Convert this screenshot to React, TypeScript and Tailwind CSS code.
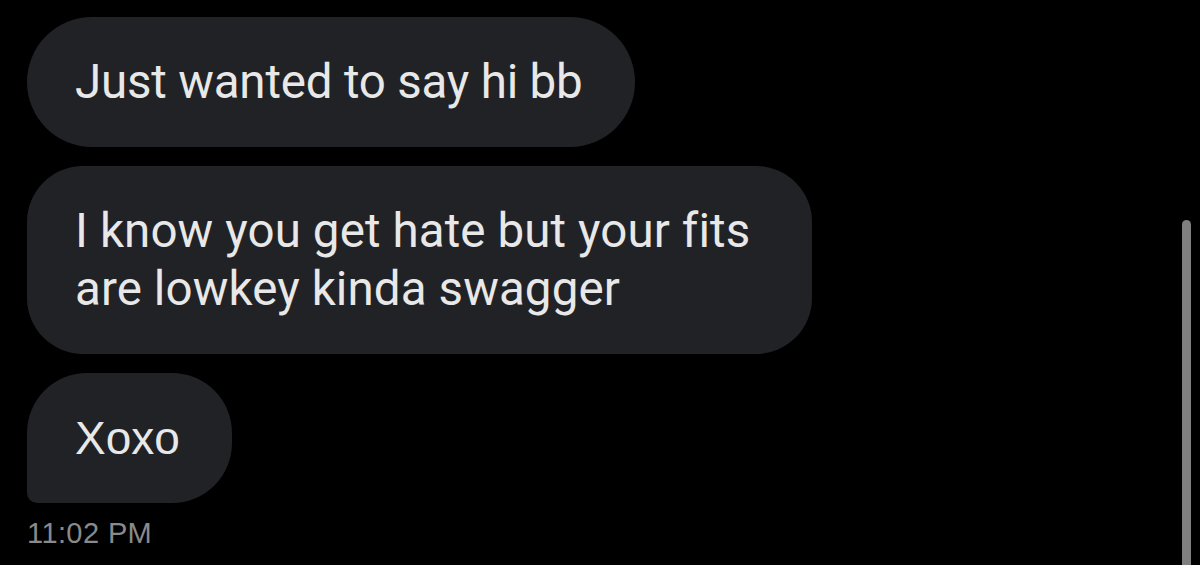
import React from "react";

export default function App() {
  return (
    <div className="relative w-[1200px] h-[565px] overflow-hidden bg-black">
      <div className="flex flex-col items-start gap-[19px] pt-[17px] pl-[27px]">
        <div className="rounded-[65px] bg-[#212226] pl-[48px] pr-[52px] py-[36px] text-[#e8e8e8] text-[47.5px] leading-[58px] tracking-[-0.2px] font-['Roboto',sans-serif]">
          Just wanted to say hi bb
        </div>
        <div className="w-[785px] rounded-[56px] bg-[#212226] pl-[48px] pr-[52px] py-[36px] text-[#e8e8e8] text-[47.5px] leading-[58px] tracking-[0.1px] [font-variant-ligatures:none] font-['Roboto',sans-serif]">
          I know you get hate but your fits are lowkey kinda swagger
        </div>
        <div className="rounded-tl-[60px] rounded-tr-[60px] rounded-br-[60px] rounded-bl-[10px] bg-[#212226] pl-[48px] pr-[52px] py-[36px] text-[#e8e8e8] text-[46px] leading-[58px] font-['Liberation_Sans',Arial,sans-serif]">
          Xoxo
        </div>
      </div>
      <div className="pl-[27px] mt-[13px] text-[#8a8a8a] text-[29px] leading-[34px] tracking-[0.4px] font-['Liberation_Sans',Arial,sans-serif]">
        11:02 PM
      </div>
      <div className="absolute left-[1182px] top-[220px] w-[9px] h-[360px] rounded-t-full bg-[#7f7f7f]" />
    </div>
  );
}
